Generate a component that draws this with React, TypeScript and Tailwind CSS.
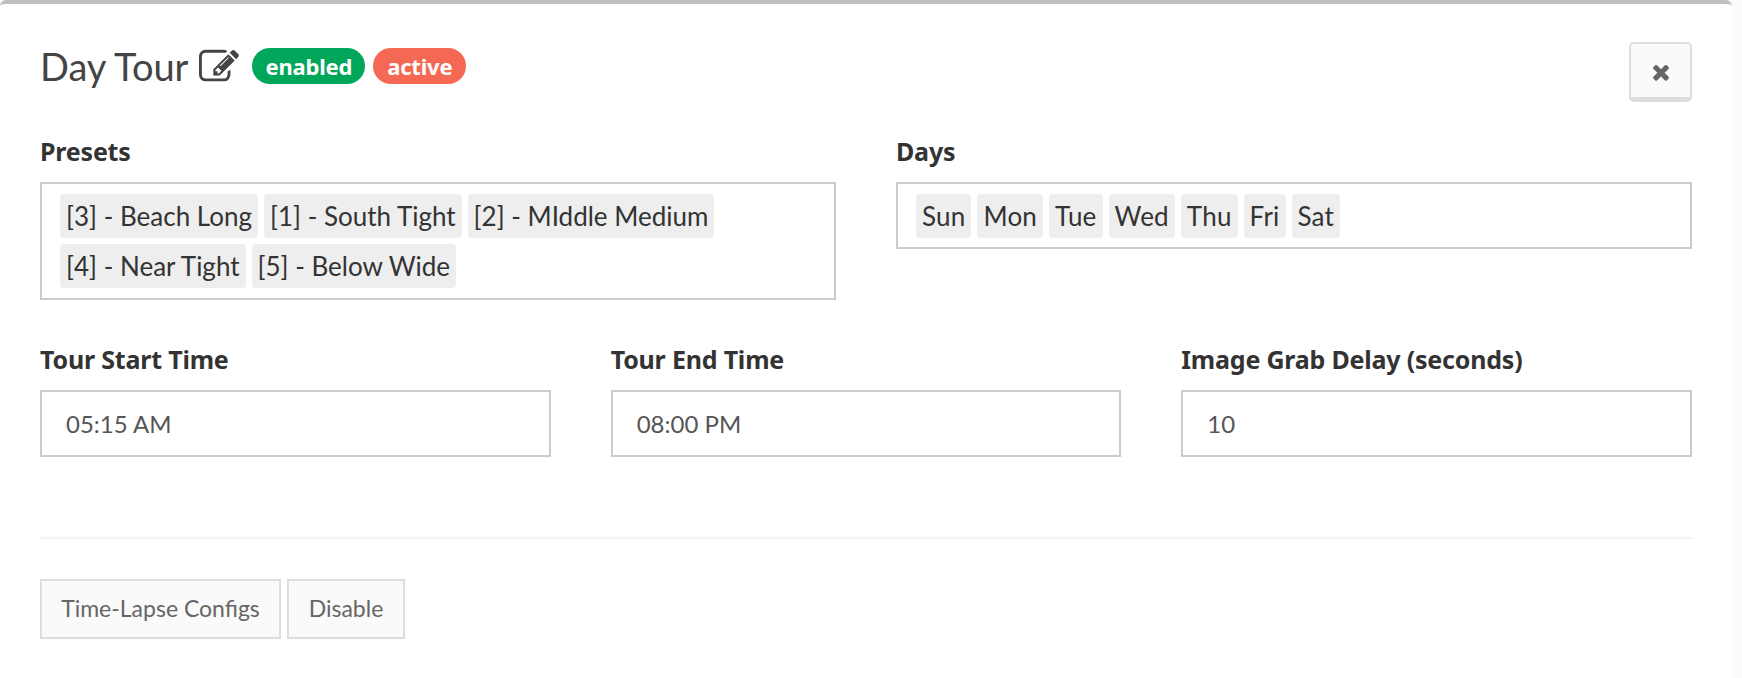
import { ReactNode } from 'react';

const presets = [
  ['[3] - Beach Long', '[1] - South Tight', '[2] - MIddle Medium'],
  ['[4] - Near Tight', '[5] - Below Wide'],
];
const days = ['Sun', 'Mon', 'Tue', 'Wed', 'Thu', 'Fri', 'Sat'];

function EditIcon() {
  return (
    <svg viewBox="0 0 1792 1792" className="ml-[11px] mt-[2px] w-[40px] h-[40px] fill-[#444444]">
      <path d="M888 1184l116-116-152-152-116 116v56h96v96h56zm440-720q-16-16-33 1l-350 350q-17 17-1 33t33-1l350-350q17-17 1-33zm80 594v190q0 119-84.5 203.5t-203.5 84.5h-832q-119 0-203.5-84.5t-84.5-203.5v-832q0-119 84.5-203.5t203.5-84.5h832q63 0 117 25 15 7 18 23 3 17-9 29l-49 49q-14 14-32 8-23-6-45-6h-832q-66 0-113 47t-47 113v832q0 66 47 113t113 47h832q66 0 113-47t47-113v-126q0-13 9-22l64-64q15-15 35-7t20 29zm-96-738l288 288-672 672h-288v-288zm444 132l-92 92-288-288 92-92q28-28 68-28t68 28l152 152q28 28 28 68t-28 68z" />
    </svg>
  );
}

function CloseIcon() {
  return (
    <svg viewBox="0 0 1792 1792" className="w-[24px] h-[24px] fill-[#666666] mt-[2px]">
      <path d="M1490 1322q0 40-28 68l-136 136q-28 28-68 28t-68-28l-294-294-294 294q-28 28-68 28t-68-28l-136-136q-28-28-28-68t28-68l294-294-294-294q-28-28-28-68t28-68l136-136q28-28 68-28t68 28l294 294 294-294q28-28 68-28t68 28l136 136q28 28 28 68t-28 68l-294 294 294 294q28 28 28 68z" />
    </svg>
  );
}

function Chip({ children }: { children: ReactNode }) {
  return (
    <span className="h-[44px] px-[6px] flex items-center rounded-[4px] bg-[#eeeeee] text-[#333333] text-[26px] whitespace-nowrap">
      {children}
    </span>
  );
}

function Label({ children }: { children: ReactNode }) {
  return (
    <div className="h-[34px] mb-[13px] flex items-center font-['Noto_Sans',sans-serif] text-[25px] font-bold text-[#333333] tracking-[-0.2px]">
      {children}
    </div>
  );
}

function TimeField({ label, value }: { label: string; value: string }) {
  return (
    <div className="flex-1 min-w-0">
      <Label>{label}</Label>
      <div className="h-[67px] px-[24px] flex items-center border-2 border-[#cccccc] text-[24px] text-[#555555]">
        {value}
      </div>
    </div>
  );
}

export default function App() {
  return (
    <div className="w-[1742px] h-[678px] bg-[#fbfbfb] font-['Lato','Liberation_Sans',sans-serif]">
      <div className="w-[1732px] h-[678px] bg-white border-t-4 border-[#c0c0c0] rounded-t-[6px] px-[40px] pt-[38px]">
        <div className="flex items-start justify-between h-[60px]">
          <div className="flex items-center">
            <span className="text-[38px] leading-[48px] text-[#444444]">Day Tour</span>
            <EditIcon />
            <span className="ml-[13px] h-[36px] px-[13px] flex items-center rounded-full bg-[#00a65a] text-white font-['Noto_Sans',sans-serif] text-[22px] font-bold tracking-[-0.2px]">enabled</span>
            <span className="ml-[8px] h-[36px] px-[14px] flex items-center rounded-full bg-[#f56954] text-white font-['Noto_Sans',sans-serif] text-[22px] font-bold tracking-[-0.2px]">active</span>
          </div>
          <button className="w-[63px] h-[60px] flex items-center justify-center rounded-[5px] bg-[#fafafa] border-2 border-b-[5px] border-[#dddddd]">
            <CloseIcon />
          </button>
        </div>

        <div className="flex gap-[60px] mt-[33px]">
          <div className="flex-1 min-w-0">
            <Label>Presets</Label>
            <div className="h-[118px] border-2 border-[#cccccc] pl-[18px] pt-[10px] flex flex-col gap-[6px]">
              {presets.map((row, i) => (
                <div key={i} className="flex gap-[6px]">
                  {row.map((p) => (
                    <Chip key={p}>{p}</Chip>
                  ))}
                </div>
              ))}
            </div>
          </div>
          <div className="flex-1 min-w-0">
            <Label>Days</Label>
            <div className="h-[67px] border-2 border-[#cccccc] pl-[18px] pt-[10px] flex gap-[6px] tracking-[0.2px]">
              {days.map((d) => (
                <Chip key={d}>{d}</Chip>
              ))}
            </div>
          </div>
        </div>

        <div className="flex gap-[60px] mt-[43px]">
          <TimeField label="Tour Start Time" value="05:15 AM" />
          <TimeField label="Tour End Time" value="08:00 PM" />
          <TimeField label="Image Grab Delay (seconds)" value="10" />
        </div>

        <div className="mt-[80px] h-[2px] bg-[#f4f4f4]" />

        <div className="flex gap-[6px] mt-[40px]">
          <button className="w-[241px] h-[60px] pb-[2px] border-2 border-[#dddddd] bg-[#fafafa] text-[23px] text-[#666666]">Time-Lapse Configs</button>
          <button className="w-[118px] h-[60px] pb-[2px] border-2 border-[#dddddd] bg-[#fafafa] text-[23px] text-[#666666]">Disable</button>
        </div>
      </div>
    </div>
  );
}
